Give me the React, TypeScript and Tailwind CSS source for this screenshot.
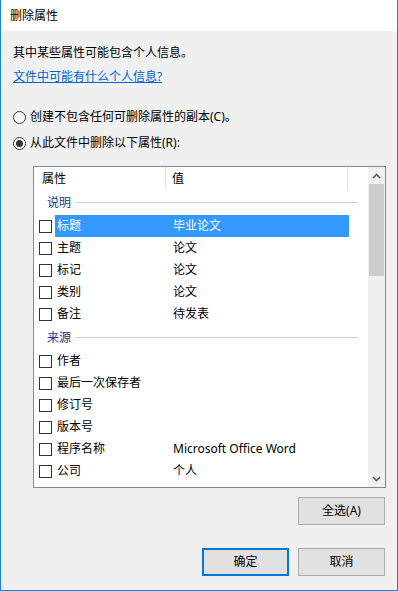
import React from "react";

const font = { fontFamily: '"Noto Sans", "Noto Sans CJK SC", sans-serif' };

function Check() {
  return <div className="w-[13px] h-[13px] border border-[#333333] bg-white shrink-0" />;
}

function Row({ name, value, selected }: { name: string; value?: string; selected?: boolean }) {
  return (
    <div className="flex items-center h-[22px] pl-[5px]">
      <Check />
      <div
        className={
          "ml-[3px] flex items-center h-[22px] w-[294px] pl-[2px] " +
          (selected ? "bg-[#3399ff] text-white" : "text-black")
        }
      >
        <span className="w-[116px] shrink-0 whitespace-nowrap">{name}</span>
        <span className="whitespace-nowrap">{value}</span>
      </div>
    </div>
  );
}

function Group({ title }: { title: string }) {
  return (
    <div className="flex items-center h-[25px] pl-[13px] pr-[10px]">
      <span className="text-[#1e3287] whitespace-nowrap">{title}</span>
      <div className="ml-[4px] flex-1 h-px bg-[#c9cfdc]" />
    </div>
  );
}

function Radio({ checked, label }: { checked?: boolean; label: string }) {
  return (
    <div className="flex items-center h-[16px]">
      <div className="w-[13px] h-[13px] rounded-full border border-[#333333] bg-white flex items-center justify-center shrink-0">
        {checked && <div className="w-[7px] h-[7px] rounded-full bg-[#333333]" />}
      </div>
      <span className="ml-[4px] whitespace-nowrap">{label}</span>
    </div>
  );
}

function Btn({ label, primary }: { label: string; primary?: boolean }) {
  return (
    <div
      className={
        "w-[87px] h-[28px] flex items-center justify-center bg-[#e1e1e1] " +
        (primary ? "border-2 border-[#0078d7]" : "border border-[#adadad]")
      }
    >
      {label}
    </div>
  );
}

export default function App() {
  return (
    <div
      className="w-[398px] h-[591px] bg-[#f0f0f0] border-l border-r border-b border-[#1883d7] flex flex-col text-[12px] text-black overflow-hidden relative"
      style={font}
    >
      <div className="h-[31px] bg-white flex items-center pl-[9px] shrink-0">删除属性</div>
      <div className="pl-[12px] flex flex-col">
        <div className="mt-[14px] h-[16px] leading-[16px]">其中某些属性可能包含个人信息。</div>
        <div className="mt-[8px] h-[16px] leading-[16px] text-[#0066cc] underline">文件中可能有什么个人信息?</div>
        <div className="mt-[24px]">
          <Radio label="创建不包含任何可删除属性的副本(C)。" />
        </div>
        <div className="mt-[10px]">
          <Radio checked label="从此文件中删除以下属性(R):" />
        </div>
        <div className="mt-[15px] ml-[20px] w-[353px] h-[322px] border border-[#828790] bg-white flex">
          <div className="w-[334px] flex flex-col overflow-hidden">
            <div className="flex h-[23px] items-center shrink-0">
              <div className="w-[132px] pl-[8px] h-full flex items-center border-r border-[#e5e5e5]">属性</div>
              <div className="w-[182px] pl-[6px] h-full flex items-center border-r border-[#e5e5e5]">值</div>
            </div>
            <Group title="说明" />
            <Row name="标题" value="毕业论文" selected />
            <Row name="主题" value="论文" />
            <Row name="标记" value="论文" />
            <Row name="类别" value="论文" />
            <Row name="备注" value="待发表" />
            <Group title="来源" />
            <Row name="作者" />
            <Row name="最后一次保存者" />
            <Row name="修订号" />
            <Row name="版本号" />
            <Row name="程序名称" value="Microsoft Office Word" />
            <Row name="公司" value="个人" />
          </div>
          <div className="w-[17px] bg-[#f0f0f0] flex flex-col">
            <div className="h-[17px] flex items-center justify-center">
              <svg width="9" height="6" viewBox="0 0 9 6">
                <path d="M1 5 L4.5 1.5 L8 5" stroke="#606060" strokeWidth="1.6" fill="none" />
              </svg>
            </div>
            <div className="mx-[1px] h-[92px] bg-[#cdcdcd]" />
            <div className="flex-1" />
            <div className="h-[17px] flex items-center justify-center">
              <svg width="9" height="6" viewBox="0 0 9 6">
                <path d="M1 1 L4.5 4.5 L8 1" stroke="#606060" strokeWidth="1.6" fill="none" />
              </svg>
            </div>
          </div>
        </div>
        <div className="mt-[9px] flex justify-end pr-[12px]">
          <Btn label="全选(A)" />
        </div>
        <div className="mt-[23px] flex justify-end pr-[12px] gap-[9px]">
          <Btn label="确定" primary />
          <Btn label="取消" />
        </div>
      </div>
    </div>
  );
}
